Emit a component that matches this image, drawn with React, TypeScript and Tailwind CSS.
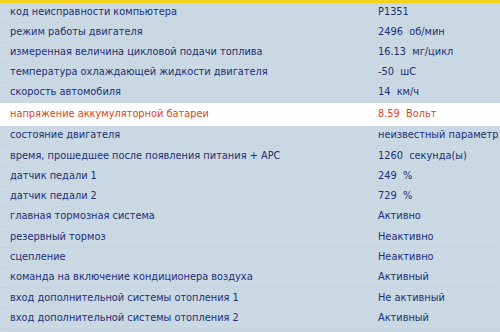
import React from "react";

const rows: [string, string][] = [
  ["код неисправности компьютера", "P1351"],
  ["режим работы двигателя", "2496  об/мин"],
  ["измеренная величина цикловой подачи топлива", "16.13  мг/цикл"],
  ["температура охлаждающей жидкости двигателя", "-50  шС"],
  ["скорость автомобиля", "14  км/ч"],
  ["напряжение аккумуляторной батареи", "8.59  Вольт"],
  ["состояние двигателя", "неизвестный параметр"],
  ["время, прошедшее после появления питания + APC", "1260  секунда(ы)"],
  ["датчик педали 1", "249  %"],
  ["датчик педали 2", "729  %"],
  ["главная тормозная система", "Активно"],
  ["резервный тормоз", "Неактивно"],
  ["сцепление", "Неактивно"],
  ["команда на включение кондиционера воздуха", "Активный"],
  ["вход дополнительной системы отопления 1", "Не активный"],
  ["вход дополнительной системы отопления 2", "Активный"],
];

export default function App() {
  return (
    <div
      className="w-[500px] h-[332px] overflow-hidden bg-[#c9d8e2] flex flex-col"
      style={{ fontFamily: '"DejaVu Sans", Verdana, sans-serif' }}
    >
      <div className="h-[3px] bg-[#f5d31c] shrink-0" />
      {rows.map(([k, v], i) => {
        const hi = i === 5;
        const h = i < 5 ? "h-[20px]" : hi ? "h-[23px]" : "h-[20.3px]";
        return (
          <div
            key={i}
            className={`${h} shrink-0 flex items-center text-[9.8px] whitespace-pre border-b border-dotted ${
              hi
                ? "bg-white text-[#d8451f] border-[#ffffff]"
                : "text-[#1d2f77] border-[#bfd0dc]"
            }`}
          >
            <div className="w-[378px] pl-[10px] shrink-0">{k}</div>
            <div>{v}</div>
          </div>
        );
      })}
    </div>
  );
}
